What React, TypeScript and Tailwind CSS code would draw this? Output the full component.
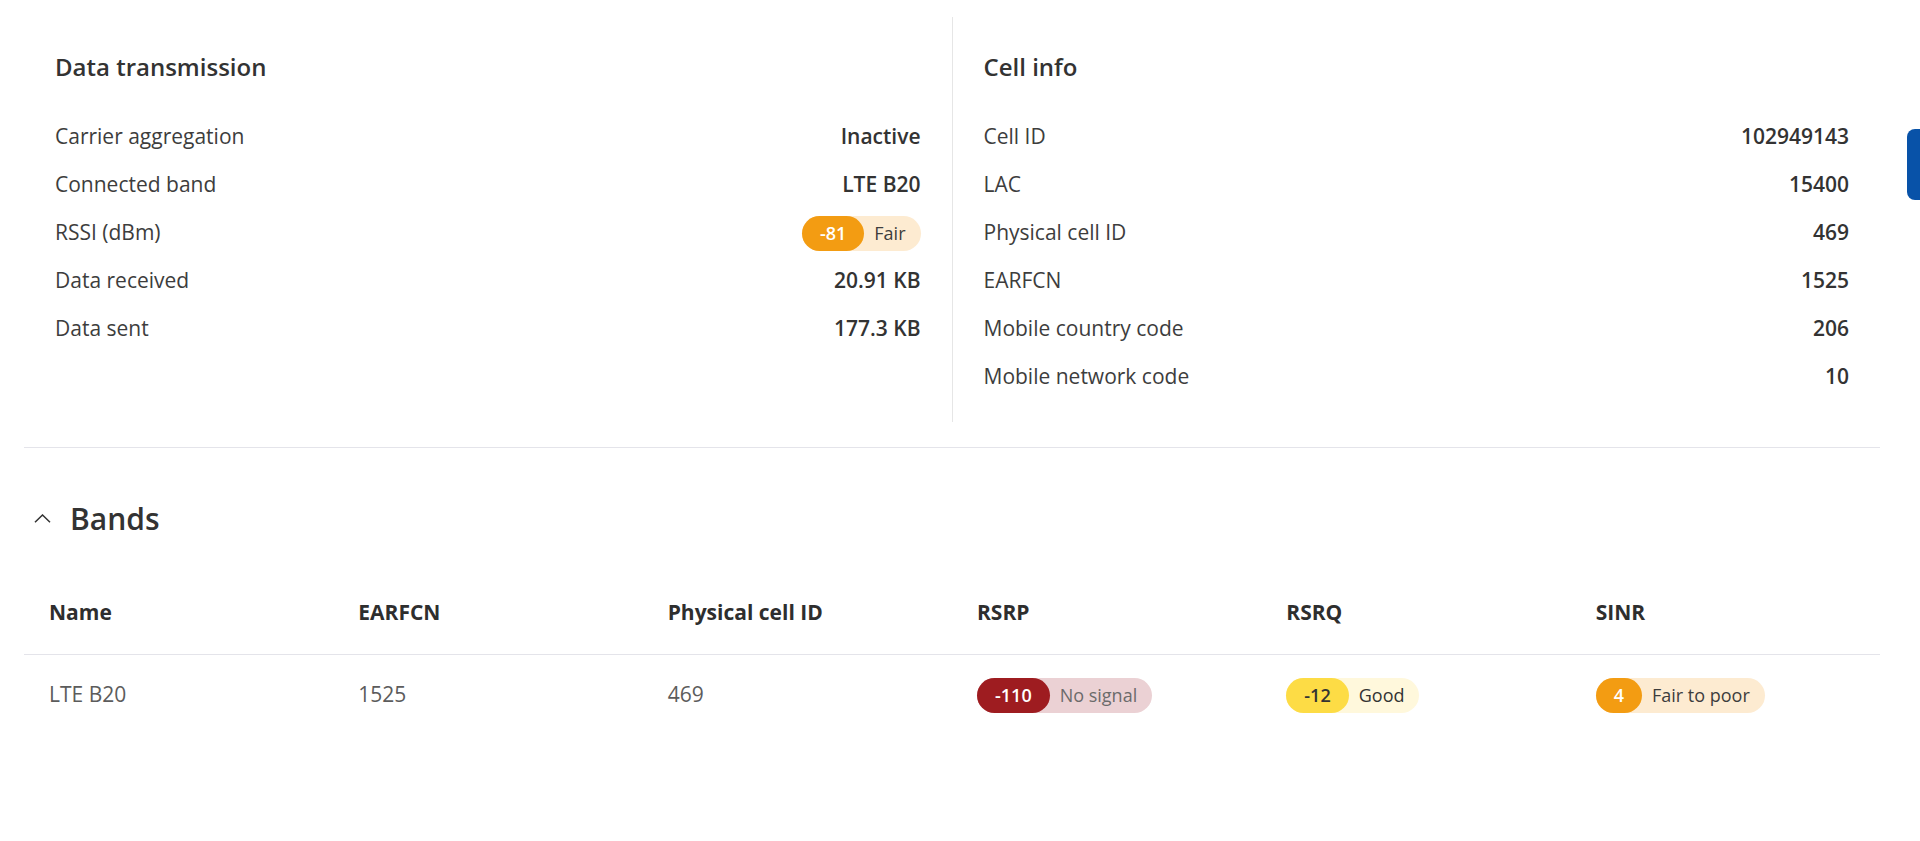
import React from "react";

type Tone = "orange" | "red" | "yellow";

const TONES: Record<Tone, { pill: string; head: string; label: string }> = {
  orange: { pill: "bg-[#fdebd1]", head: "bg-[#f39c12] text-white", label: "text-[#3d3d3d]" },
  red: { pill: "bg-[#ebd1d4]", head: "bg-[#9e1c20] text-white", label: "text-[#6b6b6b]" },
  yellow: { pill: "bg-[#fff8dc]", head: "bg-[#fddc45] text-[#333333]", label: "text-[#333333]" },
};

function SignalBadge({ value, label, tone }: { value: string; label: string; tone: Tone }) {
  const t = TONES[tone];
  return (
    <span className={`inline-flex h-[35px] items-center rounded-full text-[18px] font-normal ${t.pill}`}>
      <span className={`flex h-full items-center rounded-full px-[18px] font-semibold ${t.head}`}>{value}</span>
      <span className={`pl-[10px] pr-[15px] ${t.label}`}>{label}</span>
    </span>
  );
}

type Row = { label: string; value: React.ReactNode };

const dataRows: Row[] = [
  { label: "Carrier aggregation", value: "Inactive" },
  { label: "Connected band", value: "LTE B20" },
  { label: "RSSI (dBm)", value: <SignalBadge value="-81" label="Fair" tone="orange" /> },
  { label: "Data received", value: "20.91 KB" },
  { label: "Data sent", value: "177.3 KB" },
];

const cellRows: Row[] = [
  { label: "Cell ID", value: "102949143" },
  { label: "LAC", value: "15400" },
  { label: "Physical cell ID", value: "469" },
  { label: "EARFCN", value: "1525" },
  { label: "Mobile country code", value: "206" },
  { label: "Mobile network code", value: "10" },
];

function InfoPanel({ title, rows, divider }: { title: string; rows: Row[]; divider?: boolean }) {
  return (
    <div className={`flex-1 px-[31px] pb-[21px] pt-[35px] ${divider ? "border-r border-[#e6e6e6]" : ""}`}>
      <h2 className="text-[24px] font-semibold leading-[30px] text-[#333333]">{title}</h2>
      <div className="mt-[31px]">
        {rows.map((r) => (
          <div key={r.label} className="flex h-[48px] items-center justify-between">
            <span className="text-[#3d3d3d]">{r.label}</span>
            <span className="font-semibold text-[#333333]">{r.value}</span>
          </div>
        ))}
      </div>
    </div>
  );
}

const columns = ["Name", "EARFCN", "Physical cell ID", "RSRP", "RSRQ", "SINR"];

export default function App() {
  return (
    <div
      className="relative min-h-[841px] bg-white text-[21px]"
      style={{ fontFamily: '"Open Sans", "Noto Sans", Arial, sans-serif' }}
    >
      {/* Top info panels */}
      <section className="ml-[24px] mr-[40px] border-b border-[#e4e4ea] pb-[25px] pt-[17px]">
        <div className="flex">
          <InfoPanel title="Data transmission" rows={dataRows} divider />
          <InfoPanel title="Cell info" rows={cellRows} />
        </div>
      </section>

      {/* Bands */}
      <section className="ml-[24px] mr-[40px]">
        <button type="button" className="mt-[50px] flex h-[40px] items-center">
          <svg width="17" height="9" viewBox="0 0 17 9" className="ml-[10px]" fill="none">
            <path d="M1 8.2 8.5 1l7.5 7.2" stroke="#333333" strokeWidth="1.5" />
          </svg>
          <span className="ml-[19px] text-[30px] font-semibold text-[#333333]">Bands</span>
        </button>

        <div className="mt-[34px]">
          <div className="grid h-[83px] grid-cols-6 items-center border-b border-[#e4e4ea]">
            {columns.map((c) => (
              <div key={c} className="pl-[25px] font-bold text-[#2e2e2e]">
                {c}
              </div>
            ))}
          </div>
          <div className="grid h-[80px] grid-cols-6 items-center text-[#5c5c5c]">
            <div className="pl-[25px]">LTE B20</div>
            <div className="pl-[25px]">1525</div>
            <div className="pl-[25px]">469</div>
            <div className="pl-[25px]">
              <SignalBadge value="-110" label="No signal" tone="red" />
            </div>
            <div className="pl-[25px]">
              <SignalBadge value="-12" label="Good" tone="yellow" />
            </div>
            <div className="pl-[25px]">
              <SignalBadge value="4" label="Fair to poor" tone="orange" />
            </div>
          </div>
        </div>
      </section>

      {/* Side tab */}
      <div className="absolute right-0 top-[129px] h-[71px] w-[13px] rounded-l-[8px] bg-[#0852a8]" />
    </div>
  );
}
